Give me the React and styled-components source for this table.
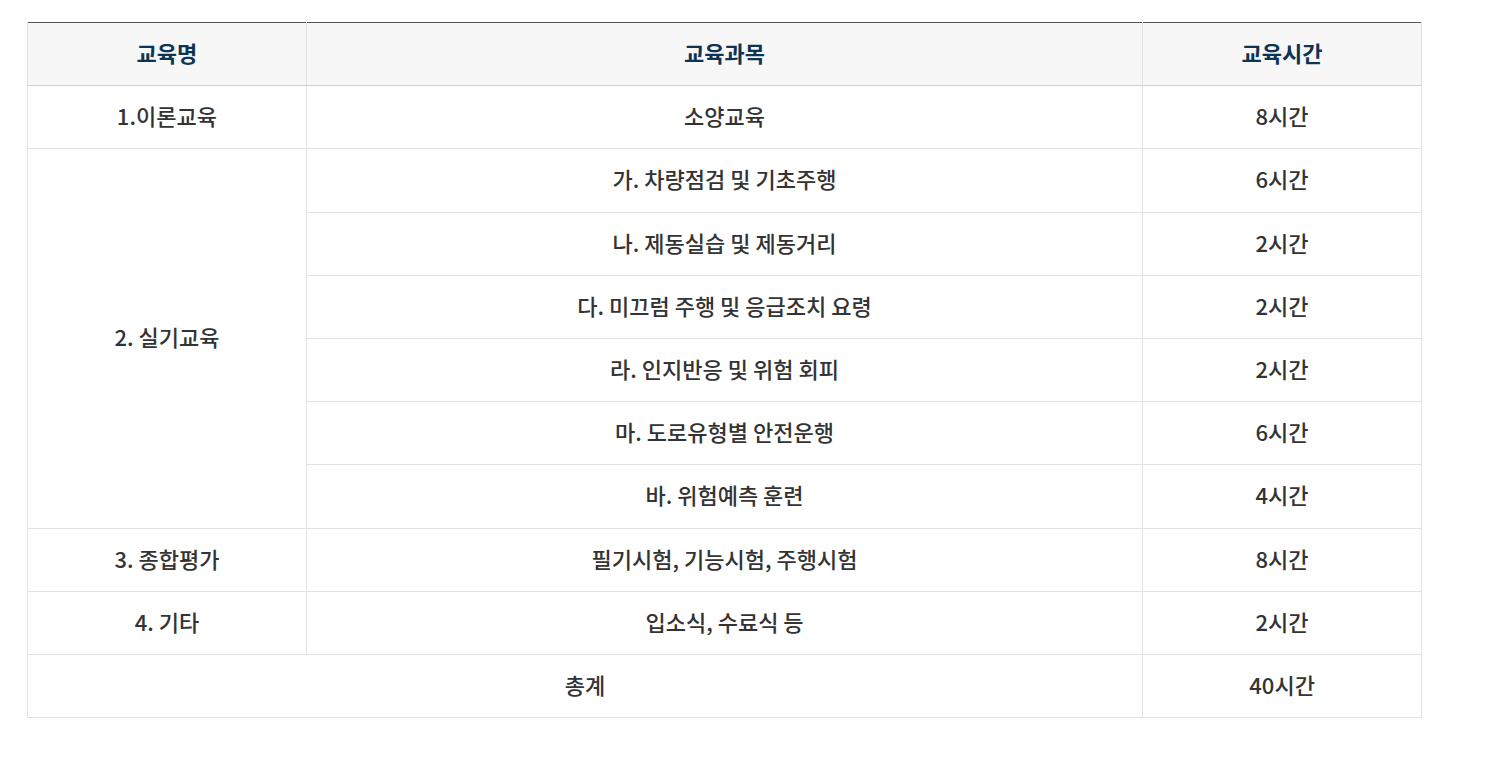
import React from "react";
import styled, { createGlobalStyle } from "styled-components";

const GlobalStyle = createGlobalStyle`
  body {
    margin: 0;
    background: #fff;
    font-family: "Noto Sans CJK KR", "Noto Sans", sans-serif;
  }
`;

const rows = [
  { name: "1.이론교육", subject: "소양교육", time: "8시간" },
  { name: "2. 실기교육", span: 6, subject: "가. 차량점검 및 기초주행", time: "6시간" },
  { subject: "나. 제동실습 및 제동거리", time: "2시간" },
  { subject: "다. 미끄럼 주행 및 응급조치 요령", time: "2시간" },
  { subject: "라. 인지반응 및 위험 회피", time: "2시간" },
  { subject: "마. 도로유형별 안전운행", time: "6시간" },
  { subject: "바. 위험예측 훈련", time: "4시간" },
  { name: "3. 종합평가", subject: "필기시험, 기능시험, 주행시험", time: "8시간" },
  { name: "4. 기타", subject: "입소식, 수료식 등", time: "2시간" },
];

const App = () => {
  return (
    <Wrapper>
      <GlobalStyle />
      <StyledTable>
        <colgroup>
          <col style={{ width: "20%" }} />
          <col style={{ width: "60%" }} />
          <col style={{ width: "20%" }} />
        </colgroup>
        <thead>
          <tr>
            <HeadCell>교육명</HeadCell>
            <HeadCell>교육과목</HeadCell>
            <HeadCell>교육시간</HeadCell>
          </tr>
        </thead>
        <tbody>
          {rows.map((row, i) => (
            <tr key={i}>
              {row.name && <Cell rowSpan={row.span || 1}>{row.name}</Cell>}
              <Cell>{row.subject}</Cell>
              <Cell>{row.time}</Cell>
            </tr>
          ))}
          <tr>
            <Cell colSpan={2}>총계</Cell>
            <Cell>40시간</Cell>
          </tr>
        </tbody>
      </StyledTable>
    </Wrapper>
  );
};

const Wrapper = styled.div`
  padding: 22px 0 0 27px;
`;

const StyledTable = styled.table`
  width: 1395px;
  border-collapse: collapse;
  table-layout: fixed;
  border-top: 1px solid #555;
`;

const HeadCell = styled.th`
  height: 58.2px;
  padding: 0 0 4px;
  background: #f7f7f7;
  color: #0d3553;
  font-size: 22px;
  font-weight: 700;
  text-align: center;
  border: 1px solid #e2e2e2;
  border-top: none;
  border-bottom: 1px solid #cfcfcf;
`;

const Cell = styled.td`
  height: 58.2px;
  padding: 0 0 4px;
  color: #333;
  font-size: 22px;
  font-weight: 500;
  text-align: center;
  border: 1px solid #e2e2e2;
`;

export default App;
